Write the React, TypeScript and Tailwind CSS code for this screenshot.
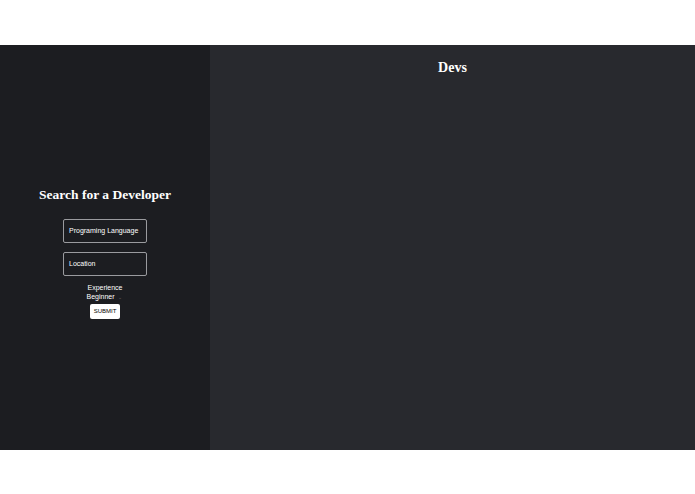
export default function App() {
  return (
    <div className="w-[695px] h-[494px] bg-white flex flex-col">
      <div className="h-[45px]" />
      <div className="flex h-[405px]">
        <div className="w-[210px] bg-[#1c1d21] flex flex-col items-center justify-center pt-[12px]">
          <h1 className="text-white text-[13.5px] font-bold font-['Liberation_Serif',serif] leading-none mb-[18px]">
            Search for a Developer
          </h1>
          <div className="flex flex-col items-center font-['Liberation_Sans',sans-serif] text-white">
            <div className="w-[84px] h-[24px] border border-[#9a9b9f] rounded-[2px] flex items-center px-[5px] text-[7px]">
              Programing Language
            </div>
            <div className="w-[84px] h-[24px] border border-[#9a9b9f] rounded-[2px] flex items-center px-[5px] text-[7px] mt-[9px]">
              Location
            </div>
            <div className="text-[7px] mt-[7px] leading-[9px]">Experience</div>
            <div className="text-[7px] leading-[10px] flex items-center gap-[3px] ml-[-2px]">
              Beginner <span className="text-[#666] text-[5px]">⌄</span>
            </div>
            <button className="mt-[2px] bg-white text-black text-[6px] w-[30px] h-[15px] rounded-[2px]">
              SUBMIT
            </button>
          </div>
        </div>
        <div className="flex-1 bg-[#28292e] flex flex-col items-center pt-[16px]">
          <h2 className="text-white text-[14px] font-bold font-['Liberation_Serif',serif] leading-none">
            Devs
          </h2>
        </div>
      </div>
    </div>
  );
}
